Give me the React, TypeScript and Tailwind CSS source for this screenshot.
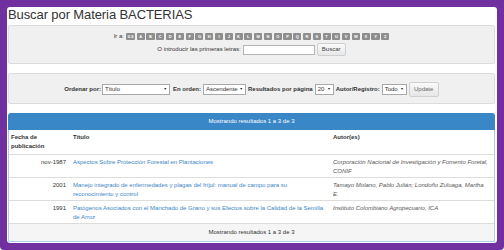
import React from "react";

const letters = ["0-9", ..."ABCDEFGHIJKLMNOPQRSTUVWXYZ".split("")];

const rows = [
  {
    date: "nov-1987",
    title: "Aspectos Sobre Protección Forestal en Plantaciones",
    author: "Corporación Nacional de Investigación y Fomento Foretal, CONIF",
  },
  {
    date: "2001",
    title:
      "Manejo integrado de enfermedades y plagas del fríjol: manual de campo para su reconocimiento y control",
    author: "Tamayo Molano, Pablo Julián; Londoño Zuluaga, Martha E.",
  },
  {
    date: "1991",
    title:
      "Patógenos Asociados con el Manchado de Grano y sus Efectos sobre la Calidad de la Semilla de Arroz",
    author: "Instituto Colombiano Agropecuario, ICA",
  },
];

function Select({ label, w }: { label: string; w: string }) {
  return (
    <div
      className={`${w} h-[11px] bg-white border border-[#a9a9a9] flex items-center justify-between pl-[2px] pr-[2px] text-[6px] leading-[9px] text-[#333]`}
    >
      <span>{label}</span>
      <span className="text-[3.5px] leading-[9px] text-[#222]">▼</span>
    </div>
  );
}

export default function App() {
  return (
    <div className="w-[504px] h-[250px] bg-white font-['Liberation_Sans',Arial,sans-serif]">
      <div className="w-[504px] h-[250px] bg-[#7030a0] pt-[7px] pl-[7px] pr-[7px] pb-[7px] rounded-bl-[4px] rounded-br-[4px]">
        <div className="h-[236px] w-[490px] bg-white rounded-[3px] pl-[1px] pr-[2px] flex flex-col">
          <h1 className="h-[18px] text-[13px] leading-[15px] text-[#333] tracking-[-0.1px] whitespace-nowrap">
            Buscar por Materia BACTERIAS
          </h1>

          <div className="h-[39px] bg-[#f0f0f0] border border-[#dcdcdc] rounded-[2px] pt-[7px] flex flex-col items-center gap-[3px]">
            <div className="flex items-center h-[7px] text-[6px] text-[#333]">
              <span className="mr-[2px]">Ir a:</span>
              <div className="flex gap-[1.7px]">
                {letters.map((l) => (
                  <span
                    key={l}
                    className={`${l === "0-9" ? "w-[9px]" : "w-[8.1px]"} h-[7px] bg-[#8e8e8e] rounded-[1px] text-white text-[4px] leading-[7px] font-bold flex items-center justify-center`}
                  >
                    {l}
                  </span>
                ))}
              </div>
            </div>
            <div className="flex items-center h-[13px] text-[6px] text-[#333]">
              <span className="mr-[2px]">O introducir las primeras letras:</span>
              <div className="w-[72px] h-[10px] bg-white border border-[#b5b5b5]" />
              <div className="ml-[2px] w-[29px] h-[13px] bg-gradient-to-b from-[#fafafa] to-[#e8e8e8] border border-[#cfcfcf] rounded-[2px] flex items-center justify-center text-[#444]">
                Buscar
              </div>
            </div>
          </div>

          <div className="mt-[9px] h-[31px] bg-[#f0f0f0] border border-[#dcdcdc] rounded-[2px] flex items-center justify-center pt-[1px] text-[6px] text-[#333]">
            <span className="font-bold mr-[1px]">Ordenar por:</span>
            <Select label="Título" w="w-[68px]" />
            <span className="font-bold ml-[3px] mr-[2px]">En orden:</span>
            <Select label="Ascendente" w="w-[43px]" />
            <span className="font-bold ml-[2px] mr-[2px]">Resultados por página</span>
            <Select label="20" w="w-[19px]" />
            <span className="font-bold ml-[2px] mr-[2px]">Autor/Registro:</span>
            <Select label="Todo" w="w-[25px]" />
            <div className="ml-[2px] w-[30px] h-[15px] bg-gradient-to-b from-[#fafafa] to-[#e6e6e6] border border-[#d0d0d0] rounded-[2px] flex items-center justify-center text-[#666]">
              Update
            </div>
          </div>

          <div className="mt-[9px] h-[129px] border border-[#a8cfea] rounded-t-[3px] flex flex-col text-[6px] text-[#333]">
            <div className="h-[17px] -mx-[1px] -mt-[1px] bg-[#3a87c8] rounded-t-[3px] text-white text-center leading-[17px]">
              Mostrando resultados 1 a 3 de 3
            </div>
            <div className="grid grid-cols-[61px_260px_1fr] border-b border-[#dddddd] leading-[9px] font-bold">
              <div className="pl-[2px] pt-[3px] pb-[3px]">
                Fecha de
                <br />
                publicación
              </div>
              <div className="pl-[3px] pt-[3px]">Título</div>
              <div className="pl-[3px] pt-[3px]">Autor(es)</div>
            </div>
            {rows.map((r) => (
              <div
                key={r.date}
                className="grid grid-cols-[61px_260px_1fr] h-[23px] border-b border-[#dddddd] leading-[9px] pt-[2.5px]"
              >
                <div className="pr-[4px] text-right">{r.date}</div>
                <div className="pl-[3px] pr-[2px] text-[#3d85c6]">{r.title}</div>
                <div className="pl-[3px] pr-[5px] italic text-[#555]">{r.author}</div>
              </div>
            ))}
            <div className="flex-1 bg-[#f5f5f5] text-center leading-[16px]">
              Mostrando resultados 1 a 3 de 3
            </div>
          </div>
        </div>
      </div>
    </div>
  );
}
